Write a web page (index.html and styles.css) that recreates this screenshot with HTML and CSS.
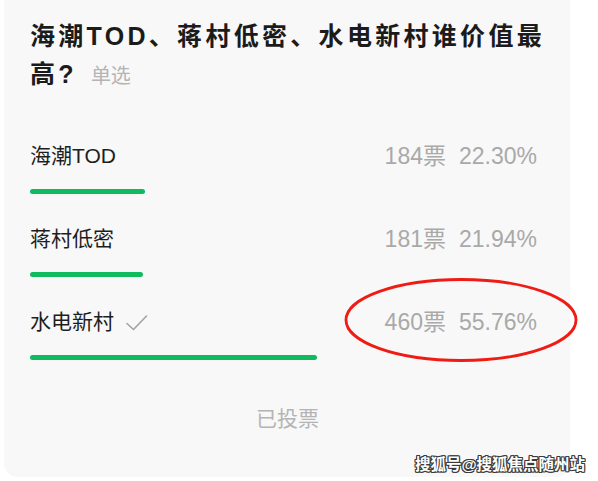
FILE: index.html
```html
<!DOCTYPE html>
<html lang="zh-CN">
<head>
<meta charset="utf-8">
<link rel="stylesheet" href="styles.css">
</head>
<body>
<div class="card">
  <h1 class="title">海潮TOD、蒋村低密、水电新村谁价值最高?<span class="tag">单选</span></h1>
  <ul class="options">
    <li class="option">
      <div class="row"><span class="label">海潮TOD</span><span class="stats"><span>184票</span><span>22.30%</span></span></div>
      <div class="track"><div class="bar" style="width:22.30%"></div></div>
    </li>
    <li class="option">
      <div class="row"><span class="label">蒋村低密</span><span class="stats"><span>181票</span><span>21.94%</span></span></div>
      <div class="track"><div class="bar" style="width:21.94%"></div></div>
    </li>
    <li class="option">
      <div class="row"><span class="label">水电新村<svg class="check" width="24" height="18" viewBox="0 0 24 18"><path d="M2 9.5 L8.5 15.5 L21.5 2" fill="none" stroke="#a3a3a3" stroke-width="1.6" stroke-linecap="round" stroke-linejoin="round"/></svg></span><span class="stats"><span>460票</span><span>55.76%</span></span></div>
      <div class="track"><div class="bar" style="width:55.76%"></div></div>
    </li>
  </ul>
  <div class="voted">已投票</div>
  <svg class="ring" width="240" height="90" viewBox="0 0 240 90"><ellipse cx="119" cy="44" rx="115" ry="40.5" fill="none" stroke="#ee1c14" stroke-width="2.8"/></svg>
</div>
<div class="watermark">搜狐号@搜狐焦点随州站</div>
</body>
</html>
```

FILE: styles.css
```css
html, body {
  margin: 0;
  padding: 0;
  background: #ffffff;
}
body {
  width: 598px;
  height: 481px;
  overflow: hidden;
  position: relative;
  font-family: "Liberation Sans", "Noto Sans CJK SC", sans-serif;
}
.card {
  position: relative;
  margin-left: 4px;
  width: 566px;
  height: 477px;
  box-sizing: border-box;
  padding: 17px 25px 0 26px;
  background: #f8f8f8;
  border-radius: 0 0 14px 14px;
}
.title {
  margin: 0 -14px 0 0;
  font-size: 25px;
  line-height: 38px;
  font-weight: 700;
  letter-spacing: 3.3px;
  color: #1b1b1b;
}
.tag {
  margin-left: 14px;
  font-size: 20px;
  font-weight: 400;
  letter-spacing: 0;
  color: #b4b4b4;
}
.options {
  list-style: none;
  margin: 46px 0 0;
  padding: 0;
  display: flex;
  flex-direction: column;
  gap: 30px;
}
.row {
  display: flex;
  justify-content: space-between;
  align-items: center;
  height: 30px;
}
.label {
  display: flex;
  align-items: center;
  font-size: 21px;
  line-height: 30px;
  color: #1e1e1e;
}
.check {
  margin-left: 11px;
  margin-top: 2px;
}
.stats {
  display: flex;
  gap: 13px;
  margin-right: 8px;
  font-size: 23px;
  line-height: 30px;
  color: #a9a9a9;
}
.track {
  margin-top: 18px;
  height: 5px;
}
.bar {
  height: 5px;
  border-radius: 3px;
  background: #10bb60;
}
.voted {
  margin-top: 44px;
  text-align: center;
  font-size: 21px;
  line-height: 30px;
  color: #b4b4b4;
}
.ring {
  position: absolute;
  left: 338px;
  top: 276px;
}
.watermark {
  position: absolute;
  left: 415px;
  top: 454px;
  font-size: 15.5px;
  line-height: 22px;
  font-weight: 700;
  color: #ffffff;
  white-space: nowrap;
  text-shadow: 1px 0 0 #3a3a3a, -1px 0 0 #3a3a3a, 0 1px 0 #3a3a3a, 0 -1px 0 #3a3a3a, 1px 1px 0 #3a3a3a, -1px -1px 0 #3a3a3a, 1px -1px 0 #3a3a3a, -1px 1px 0 #3a3a3a;
}
```
